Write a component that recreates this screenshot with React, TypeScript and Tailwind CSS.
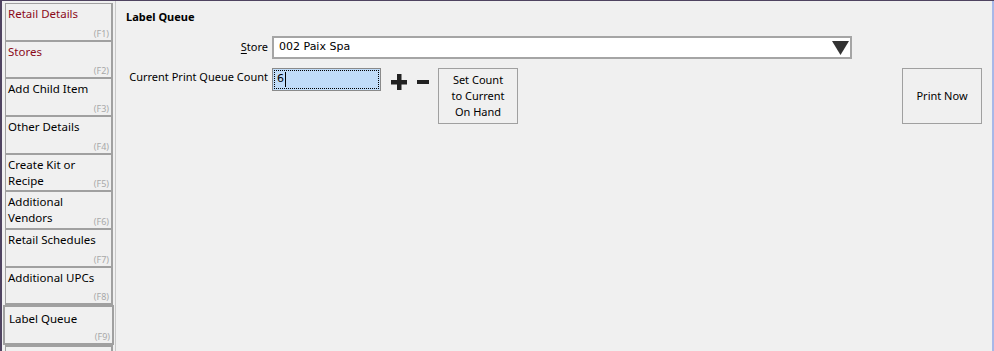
import React from 'react';

const tabs = [
  { label: ['Retail Details'], key: 'F1', red: true },
  { label: ['Stores'], key: 'F2', red: true },
  { label: ['Add Child Item'], key: 'F3' },
  { label: ['Other Details'], key: 'F4' },
  { label: ['Create Kit or', 'Recipe'], key: 'F5' },
  { label: ['Additional', 'Vendors'], key: 'F6' },
  { label: ['Retail Schedules'], key: 'F7' },
  { label: ['Additional UPCs'], key: 'F8' },
];

function Tab({ label, fkey, red, active }: { label: string[]; fkey: string; red?: boolean; active?: boolean }) {
  if (active) {
    return (
      <div className="relative h-[40px] w-[111px] border-2 border-[#a0a0a0] bg-[#f0f0f0] pl-[4px] pt-[4px]">
        <div className="text-[11.5px] leading-[16px] text-black">{label[0]}</div>
        <span className="absolute bottom-[1px] right-[2px] text-[9px] leading-[10px] text-[#a8a8a8]">({fkey})</span>
      </div>
    );
  }
  return (
    <div className="relative ml-[2px] h-[38px] w-[108px] border-r-2 border-b-2 border-l border-[#a0a0a0] pl-[2px] pt-[2px]">
      {label.map((l) => (
        <div key={l} className={`text-[11.5px] leading-[16px] ${red ? 'text-[#8b0a1a]' : 'text-black'}`}>
          {l}
        </div>
      ))}
      <span className="absolute bottom-[1px] right-[2px] text-[9px] leading-[10px] text-[#a8a8a8]">({fkey})</span>
    </div>
  );
}

export default function App() {
  return (
    <div
      className="flex h-[351px] w-[994px] overflow-hidden border-t border-l-2 border-[#4f4360] bg-[#f0f0f0]"
      style={{ fontFamily: '"Noto Sans", sans-serif' }}
    >
      {/* Tab column */}
      <div className="flex w-[113px] shrink-0 flex-col pl-[1px] pt-[2px]">
        <div className="ml-[2px] w-[108px] border-t border-[#a0a0a0]" />
        {tabs.map((t) => (
          <Tab key={t.key} label={t.label} fkey={t.key} red={t.red} />
        ))}
        <Tab label={['Label Queue']} fkey="F9" active />
        <div className="ml-[2px] h-[6px] w-[108px] border-t-2 border-l border-r-2 border-[#a0a0a0]" />
      </div>

      {/* Main panel */}
      <div className="flex flex-1 flex-col border-l border-[#c8c8c8] border-r-2 border-r-[#a8b8e8] pl-[10px] pr-[10px] pt-[8px]">
        <div className="text-[11px] font-bold leading-[16px] text-black">Label Queue</div>

        <div className="mt-[11px] flex items-center">
          <div className="w-[146px] whitespace-nowrap pr-[4px] text-right text-[11px] text-black">
            <span className="underline underline-offset-2">S</span>tore
          </div>
          <div className="relative flex h-[23px] w-[580px] items-center border-2 border-[#a5a5a5] bg-white pl-[5px]">
            <span className="text-[11px] text-black" style={{ fontFamily: '"DejaVu Sans", sans-serif' }}>
              002 Paix Spa
            </span>
            <svg className="absolute right-[1px] top-[3px]" width="17" height="14" viewBox="0 0 17 14">
              <polygon points="0,0 17,0 8.5,14" fill="#333333" />
            </svg>
          </div>
        </div>

        <div className="mt-[9px] flex items-start">
          <div className="w-[146px] whitespace-nowrap pr-[4px] pt-[1px] text-right text-[11px] leading-[16px] text-black">
            Current Print Queue Count
          </div>
          <div className="h-[23px] w-[109px] border border-[#8a8a8a] bg-[#c0dcf8] p-[1px]">
            <div className="flex h-full items-center border border-dotted border-black pl-[2px]">
              <span className="text-[11px] text-black" style={{ fontFamily: '"DejaVu Sans", sans-serif' }}>6</span>
              <span className="ml-[1px] h-[15px] w-px bg-black" />
            </div>
          </div>
          <svg className="ml-[10px] mt-[6px]" width="16" height="16" viewBox="0 0 16 16">
            <rect x="6" y="0" width="4.5" height="16" fill="#222" />
            <rect x="0" y="6" width="16" height="4.5" fill="#222" />
          </svg>
          <svg className="ml-[10px] mt-[6px]" width="12" height="16" viewBox="0 0 12 16">
            <rect x="0" y="6" width="12" height="4" fill="#222" />
          </svg>
          <button className="ml-[9px] flex h-[56px] w-[80px] flex-col items-center justify-center border border-[#a0a0a0] bg-[#f0f0f0] text-[11px] leading-[16px] text-black">
            <span>Set Count</span>
            <span>to Current</span>
            <span>On Hand</span>
          </button>
          <div className="flex-1" />
          <button className="flex h-[56px] w-[80px] items-center justify-center border border-[#a0a0a0] bg-[#f0f0f0] text-[11px] text-black">
            Print Now
          </button>
        </div>
      </div>
    </div>
  );
}
